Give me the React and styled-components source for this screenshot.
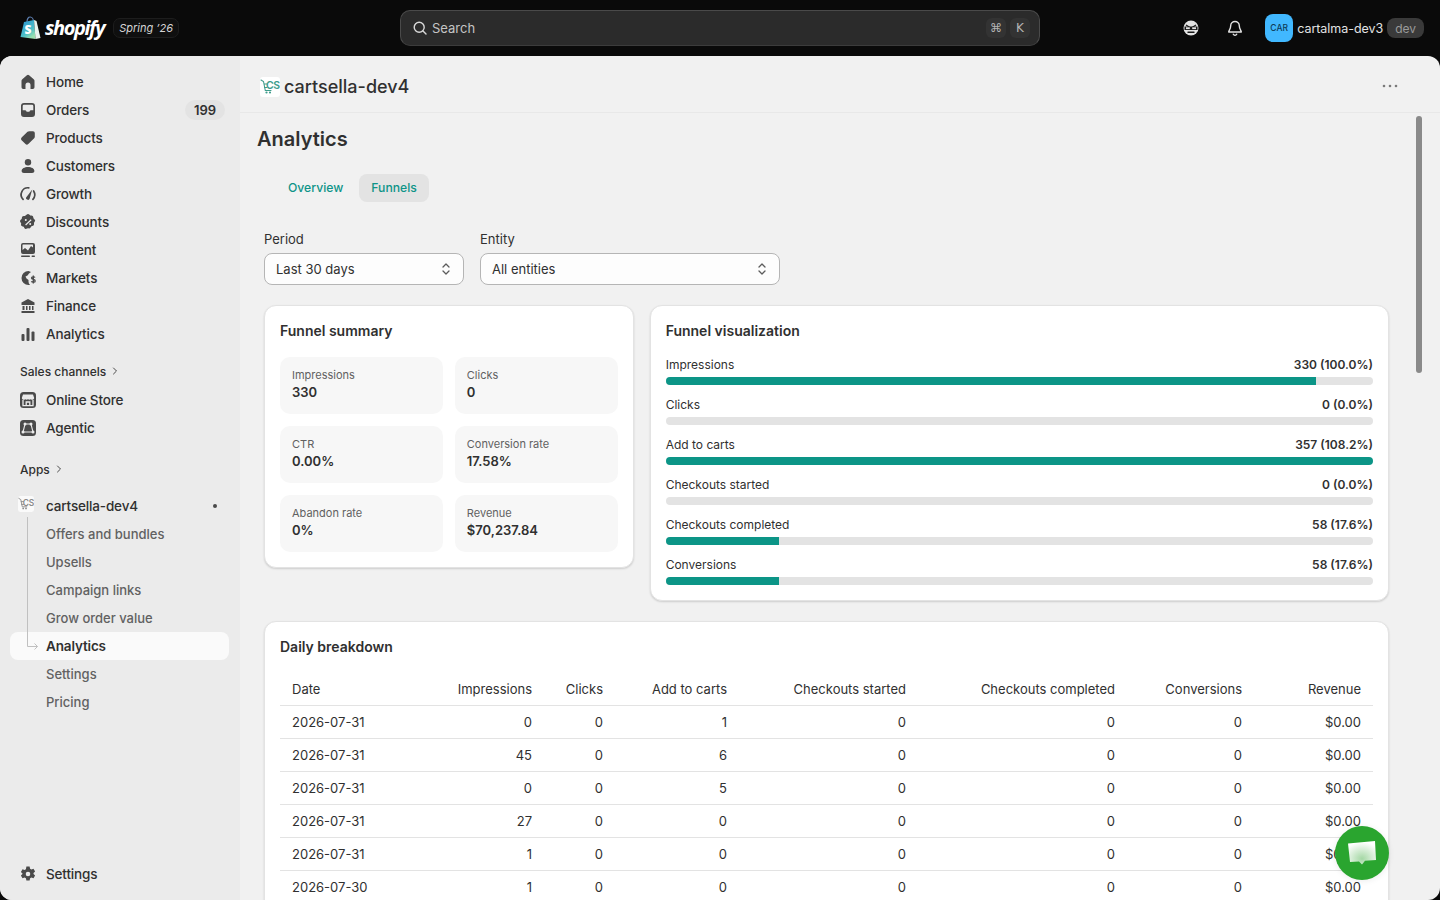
import React from "react";
import styled, { createGlobalStyle } from "styled-components";

const Global = createGlobalStyle`
  * { box-sizing: border-box; }
  html, body { margin: 0; height: 100%; overflow: hidden; background: #0a0a0a; }
  body { font-family: Inter, "Noto Sans", sans-serif; color: #303030; -webkit-font-smoothing: antialiased; }
`;

const Shell = styled.div`display: flex; flex-direction: column; height: 100vh;`;

const TopBar = styled.header`
  flex: 0 0 56px; display: grid; grid-template-columns: 1fr 640px 1fr; align-items: center;
  padding: 0 16px; background: #0a0a0a;
`;
const Brand = styled.div`display: flex; align-items: center; padding-left: 4px;`;
const Wordmark = styled.span`
  margin-left: 4px; color: #fff; font: italic 700 20px/24px "Open Sans", "Liberation Sans", sans-serif; letter-spacing: -1.4px;
`;
const Edition = styled.span`
  margin-left: 9px; height: 20px; padding: 0 5px; display: inline-flex; align-items: center; border: 1px solid #1d1d1d;
  border-radius: 7px; background: #0f0f0f; color: #d4d4d4; font-size: 11px; font-style: italic;
`;
const Search = styled.div`
  height: 36px; display: flex; align-items: center; gap: 4px; padding: 0 9px 0 11px; background: #2b2b2b;
  border: 1px solid #4a4a4a; border-bottom-color: #3c3c3c; border-radius: 10px; color: #c4c4c4; font-size: 13px;
`;
const SearchText = styled.span`flex: 1;`;
const KeyCap = styled.span`
  width: 20px; height: 20px; display: inline-flex; align-items: center; justify-content: center;
  background: #333; border-radius: 6px; color: #b5b5b5; font-size: 12px; font-family: "DejaVu Sans", Inter, sans-serif;
`;
const TopRight = styled.div`display: flex; align-items: center; justify-content: flex-end;`;
const TopIcon = styled.span`display: inline-flex; width: 20px; height: 20px; margin-right: 24px; &:nth-child(2){ margin-right: 20px; }`;
const Avatar = styled.span`
  width: 28px; height: 28px; display: inline-flex; align-items: center; justify-content: center; border-radius: 8px;
  background: #41b8ff; color: #0e3b57; font-size: 8.5px; font-weight: 500; letter-spacing: .2px;
`;
const StoreName = styled.span`margin-left: 4px; color: #e3e3e3; font-size: 12.5px; font-weight: 400; letter-spacing: -0.05px;`;
const DevPill = styled.span`
  margin-left: 4px; height: 20px; padding: 0 8px; display: inline-flex; align-items: center; border-radius: 8px;
  background: #3a3a3a; color: #9a9a9a; font-size: 12px;
`;

const Panel = styled.div`flex: 1; min-height: 0; display: flex; border-radius: 12px; overflow: hidden; background: #f1f1f1;`;
const Sidebar = styled.aside`
  flex: 0 0 240px; display: flex; flex-direction: column; padding: 12px 11px 12px 10px; background: #ebebeb;
`;
const NavRow = styled.div`
  position: relative; height: 28px; flex: none; display: flex; align-items: center; gap: 8px; padding: 0 4px 0 8px; border-radius: 8px;
  font-size: ${p => (p.$muted ? "13px" : "13.5px")}; letter-spacing: ${p => (p.$muted ? "0" : "-0.15px")};
  line-height: 20px; font-weight: ${p => (p.$strong ? 600 : 450)};
  color: ${p => (p.$muted ? "#616161" : "#303030")};
  background: ${p => (p.$active ? "#fafafa" : "transparent")};
  padding-left: ${p => (p.$sub ? 36 : 8)}px;
`;
const NavIcon = styled.span`width: 20px; height: 20px; flex: none; display: inline-flex;`;
const NavLabel = styled.span`flex: 1;`;
const Count = styled.span`
  height: 20px; width: 40px; display: inline-flex; align-items: center; justify-content: center; border-radius: 10px;
  background: #e3e3e3; font-size: 13px; font-weight: 600; letter-spacing: 0;
`;
const SectionTitle = styled.div`
  height: 28px; flex: none; display: flex; align-items: center; gap: 5px; padding-left: 10px; font-size: 12px; font-weight: 500;
  margin-top: ${p => p.$top}px; margin-bottom: ${p => p.$bottom}px;
`;
const AppDot = styled.span`width: 4px; height: 4px; margin-right: 8px; border-radius: 50%; background: #4a4a4a;`;
const Tree = styled.div`position: relative; display: flex; flex-direction: column;`;
const TreeLine = styled.svg`position: absolute; left: 14px; top: -4px; z-index: 1;`;
const Spacer = styled.div`flex: 1;`;

const Main = styled.main`position: relative; flex: 1; min-width: 0; display: flex; flex-direction: column;`;
const AppHeader = styled.div`
  flex: 0 0 57px; display: flex; align-items: center; justify-content: space-between; padding: 5px 42px 0 20px;
  border-bottom: 1px solid #e8e8e8;
`;
const AppTitle = styled.div`display: flex; align-items: center; gap: 4px; font-size: 18px; font-weight: 550;`;
const Dots = styled.svg`display: block; margin-top: -2px;`;
const Scroll = styled.div`flex: 1; min-height: 0; overflow: hidden; padding: 12px 51px 0 24px;`;
const Thumb = styled.div`
  position: absolute; right: 18px; top: 60px; width: 6px; height: 257px; border-radius: 3px; background: #8a8a8a;
`;
const PageTitle = styled.h1`margin: 0 0 0 -7px; font-size: 20px; line-height: 28px; font-weight: 600;`;
const Tabs = styled.div`display: flex; gap: 4px; margin: 21px 0 0 12px;`;
const Tab = styled.span`
  height: 28px; display: inline-flex; align-items: center; padding: 0 12px 2px; border-radius: 8px; color: #0d9488;
  font-size: 12.2px; font-weight: 550; background: ${p => (p.$active ? "#e3e3e3" : "transparent")};
`;
const Filters = styled.div`display: flex; gap: 16px; margin-top: 27px;`;
const Field = styled.div`width: ${p => p.$w}px;`;
const FieldLabel = styled.div`font-size: 13px; line-height: 20px; margin-bottom: 4px;`;
const Select = styled.div`
  height: 32px; display: flex; align-items: center; justify-content: space-between; padding: 0 9px 0 11px;
  background: #fdfdfd; border: 1px solid #b5b5b5; border-radius: 8px; font-size: 13px;
`;
const Grid = styled.div`display: grid; grid-template-columns: 1fr 2fr; gap: 16px; align-items: start; margin-top: 20px;`;
const Card = styled.section`
  background: #fff; border: 1px solid #e3e3e3; border-radius: 12px; padding: 15px;
  box-shadow: 0 1px 2px rgba(0,0,0,.15); margin-top: ${p => p.$top || 0}px;
`;
const CardTitle = styled.h2`margin: 0; font-size: 14px; line-height: 20px; font-weight: 600;`;
const Tiles = styled.div`display: grid; grid-template-columns: 1fr 1fr; gap: 12px; margin-top: 16px;`;
const Tile = styled.div`height: 57px; padding: 11px 12px; border-radius: 10px; background: #f7f7f7;`;
const TileLabel = styled.div`font-size: 11px; line-height: 14px; margin-bottom: 1px; color: #616161;`;
const TileValue = styled.div`font-size: 13px; line-height: 18px; font-weight: 600;`;
const Bars = styled.div`display: flex; flex-direction: column; gap: 10px; margin-top: 14px;`;
const BarHead = styled.div`display: flex; justify-content: space-between; font-size: 12px; line-height: 20px; height: 20px;`;
const BarValue = styled.span`font-weight: 600;`;
const Track = styled.div`height: 8px; margin-top: 2px; border-radius: 4px; background: #e3e3e3; overflow: hidden;`;
const Fill = styled.div`height: 100%; background: #0c9587;`;
const Table = styled.table`width: 100%; margin-top: 15px; border-collapse: collapse; table-layout: fixed; font-size: 13px;`;
const Th = styled.th`
  height: 33px; padding: 2px 12px 0; border-bottom: 1px solid #e3e3e3; font-weight: 400;
  text-align: ${p => (p.$left ? "left" : "right")};
`;
const Td = styled.td`
  height: 33px; padding: 0 12px; border-bottom: 1px solid #e3e3e3;
  text-align: ${p => (p.$left ? "left" : "right")};
`;
const ChatButton = styled.div`
  position: fixed; left: 1335px; top: 826px; width: 54px; height: 54px; display: flex; align-items: center; justify-content: center;
  border-radius: 50%; background: #2aa52f; box-shadow: 0 1px 6px rgba(0,0,0,.08);
`;

const I = ({ children }) => <svg width="20" height="20" viewBox="0 0 20 20" fill="#4a4a4a">{children}</svg>;
const icons = {
  home: <I><path d="M8.900 3.300a1.700 1.700 0 0 1 2.200 0l4.600 3.900c.5.4.8 1 .8 1.600v6.500a1.700 1.700 0 0 1-1.700 1.700h-2.300v-4a2.500 2.500 0 0 0-5 0v4H5.200a1.700 1.700 0 0 1-1.700-1.700V8.800c0-.6.3-1.200.8-1.600z" /></I>,
  orders: <I><path fillRule="evenodd" d="M6 3h8a3 3 0 0 1 3 3v8a3 3 0 0 1-3 3H6a3 3 0 0 1-3-3V6a3 3 0 0 1 3-3zm0 1.700A1.300 1.300 0 0 0 4.700 6v4.300h2.400c.6 0 1 .3 1.200.8l.3.600h2.800l.3-.6c.2-.5.700-.8 1.200-.8h2.400V6A1.300 1.300 0 0 0 14 4.700z" /></I>,
  products: <I><path d="M11.300 3.200H15a1.800 1.800 0 0 1 1.800 1.800v3.700c0 .6-.2 1.100-.6 1.500l-5.900 5.900a2 2 0 0 1-2.800 0l-3.900-3.900a2 2 0 0 1 0-2.800l5.900-5.700c.5-.3 1.100-.5 1.800-.5z" /></I>,
  customers: <I><circle cx="10" cy="6.200" r="3.200" /><path d="M3.600 15c0-2.400 2.800-4 6.400-4s6.400 1.600 6.400 4c0 1.300-1 2-2.300 2H5.900c-1.300 0-2.300-.7-2.300-2z" /></I>,
  growth: <I><path fill="none" stroke="#4a4a4a" strokeWidth="1.700" strokeLinecap="round" d="M5.100 15.300A6.800 6.800 0 0 1 10.800 3.800M15.600 7A6.800 6.800 0 0 1 14.900 15.300" /><path d="M14.200 5.400 8.700 12.800a1.800 1.800 0 1 0 3 1.800z" /></I>,
  discounts: <I><path fillRule="evenodd" d="M8.500 2.800a2 2 0 0 1 3 0l.7.7 1-.1a2 2 0 0 1 2.100 1.900l.1 1 .8.600a2 2 0 0 1 .3 3l-.6.8.2 1a2 2 0 0 1-1.700 2.300l-1 .2-.5.9a2 2 0 0 1-2.900.8L10 16l-.9.500a2 2 0 0 1-2.900-.8l-.5-.9-1-.2A2 2 0 0 1 3 12.300l.2-1-.6-.7a2 2 0 0 1 .3-3l.8-.7.100-1a2 2 0 0 1 2.100-1.900l1 .1zM7.800 7a1 1 0 1 0 0 2 1 1 0 0 0 0-2zm4.400 4a1 1 0 1 0 0 2 1 1 0 0 0 0-2zm.6-3.700-5.600 5.200.8.900 5.600-5.200z" /></I>,
  content: <I><path fillRule="evenodd" d="M5 3h10a2 2 0 0 1 2 2v7a2 2 0 0 1-2 2H5a2 2 0 0 1-2-2V5a2 2 0 0 1 2-2zm0 1.500a.5.5 0 0 0-.5.500v5l2.500-2 3 2.500 3-4.500 2 1.500V5a.5.5 0 0 0-.5-.5z" /><rect x="3" y="15.500" width="9" height="1.500" rx=".7" /><rect x="13.500" y="15.500" width="3.500" height="1.500" rx=".7" /></I>,
  markets: <I><path d="M10.500 3a7 7 0 1 0 0 14c.6 0 1-.1 1.500-.2a4 4 0 0 1-1.500-3V12l-2-1.500-1-2 2-1 1.500-2 2-1.500z" /><path fill="none" stroke="#4a4a4a" strokeWidth="1.300" d="M17 9.500c-.5-.8-3.500-1-3.500.6 0 1.800 3.700.9 3.700 2.800 0 1.700-3.200 1.500-3.900.5M15.300 7.500v8" /></I>,
  finance: <I><path d="M10 3 3.500 6.500V9h13V6.500z" /><path d="M4.500 10h2v4h-2zm3.500 0h1.500v4H8zm3 0h1.500v4H11zm3 0h1.500v4H14zM3.500 15h13v2h-13z" /></I>,
  analytics: <I><rect x="3.500" y="10" width="3" height="7" rx="1" /><rect x="8.500" y="4" width="3" height="13" rx="1" /><rect x="13.500" y="7.500" width="3" height="9.500" rx="1" /></I>,
  store: <I><rect x="2" y="2" width="16" height="16" rx="3.500" /><path fill="#ebebeb" d="M5 4.500h10l1.200 3.500a2 2 0 0 1-3.300 1.300 2.600 2.600 0 0 1-2.900 0 2.600 2.600 0 0 1-2.900 0A2 2 0 0 1 3.800 8z" /><path fill="none" stroke="#ebebeb" strokeWidth="1.300" d="M5 10v5.700h10V10M8.200 15.500v-3.500h3.600v3.500" /></I>,
  agentic: <I><rect x="2" y="2" width="16" height="16" rx="3.500" /><path fill="none" stroke="#ebebeb" strokeWidth="1.100" d="M7 6h6l2 8H5z" /><circle cx="7" cy="6" r="1.500" fill="#ebebeb" /><circle cx="13" cy="6" r="1.500" fill="#ebebeb" /><circle cx="5" cy="14" r="1.500" fill="#ebebeb" /><circle cx="15" cy="14" r="1.500" fill="#ebebeb" /></I>,
  settings: <I><path fillRule="evenodd" d="M8.400 2.500h3.200l.5 2.200 1.300.7 2.100-.7 1.600 2.700-1.600 1.500v1.200l1.600 1.500-1.600 2.700-2.100-.7-1.300.7-.5 2.200H8.400l-.5-2.200-1.300-.7-2.100.7-1.600-2.700 1.600-1.500V9.400L2.900 7.900l1.600-2.700 2.100.7 1.300-.7zM10 7.700a2.300 2.300 0 1 0 0 4.600 2.300 2.300 0 0 0 0-4.600z" /></I>,
};

const UpDown = () => (
  <svg width="16" height="16" viewBox="0 0 16 16" fill="none" stroke="#5c5c5c" strokeWidth="1.300" strokeLinecap="round" strokeLinejoin="round"><path d="M5 6 8 3l3 3M5 10l3 3 3-3" /></svg>
);
const SmallChevron = () => (
  <svg width="8" height="8" viewBox="0 0 8 8" fill="none" stroke="#4a4a4a" strokeWidth="1" strokeLinecap="round" strokeLinejoin="round"><path d="m2.500 1 3 3-3 3" /></svg>
);
const CsLogo = ({ size, color, tile }) => (
  <svg width={size} height={size} viewBox="0 0 20 20">
    <rect width="20" height="20" rx="3" fill={tile} />
    <path d="M1 3 3.500 4.500l1.800 9H11M4 7h3M4.500 10.500H7" fill="none" stroke={color} strokeWidth="1.100" strokeLinecap="round" />
    <circle cx="6.500" cy="15.500" r="1.100" fill={color} /><circle cx="10" cy="15.500" r="1.100" fill={color} />
    <text x="6" y="12" fontFamily="Inter, sans-serif" fontSize="10.500" fontWeight="600" letterSpacing="-.4" fill={color}>CS</text>
  </svg>
);

const items = [
  ["home", "Home"], ["orders", "Orders", "199"], ["products", "Products"], ["customers", "Customers"], ["growth", "Growth"],
  ["discounts", "Discounts"], ["content", "Content"], ["markets", "Markets"], ["finance", "Finance"], ["analytics", "Analytics"],
];
const tiles = [
  ["Impressions", "330"], ["Clicks", "0"], ["CTR", "0.00%"], ["Conversion rate", "17.58%"], ["Abandon rate", "0%"], ["Revenue", "$70,237.84"],
];
const bars = [
  ["Impressions", "330 (100.0%)", 91.9], ["Clicks", "0 (0.0%)", 0], ["Add to carts", "357 (108.2%)", 100],
  ["Checkouts started", "0 (0.0%)", 0], ["Checkouts completed", "58 (17.6%)", 16], ["Conversions", "58 (17.6%)", 16],
];
const widths = [164, 100, 71, 124, 179, 209, 127, 119];
const heads = ["Date", "Impressions", "Clicks", "Add to carts", "Checkouts started", "Checkouts completed", "Conversions", "Revenue"];
const rows = [
  ["2026-07-31", 0, 0, 1, 0, 0, 0, "$0.00"],
  ["2026-07-31", 45, 0, 6, 0, 0, 0, "$0.00"],
  ["2026-07-31", 0, 0, 5, 0, 0, 0, "$0.00"],
  ["2026-07-31", 27, 0, 0, 0, 0, 0, "$0.00"],
  ["2026-07-31", 1, 0, 0, 0, 0, 0, "$0.00"],
  ["2026-07-30", 1, 0, 0, 0, 0, 0, "$0.00"],
];

export default function App() {
  return (
    <Shell>
      <Global />
      <TopBar>
        <Brand>
          <svg width="21" height="24" viewBox="0 0 21 24">
            <defs>
              <linearGradient id="bag" x1="0" y1="0" x2="0.6" y2="1">
                <stop offset="0" stopColor="#2a8fd0" /><stop offset=".7" stopColor="#4cc0c8" /><stop offset="1" stopColor="#9be0b0" />
              </linearGradient>
            </defs>
            <path d="M7 6c0-3 1.500-5 3.200-5S13.500 3 13.500 6" fill="none" stroke="#5d7fb0" strokeWidth="1.200" />
            <path d="M4 6 14 4l1.500 19L0.500 21z" fill="url(#bag)" />
            <path d="M14 4l2.500 1 4 17-5 1z" fill="#e9f3ee" />
            <text x="4.500" y="18" fontFamily="'Open Sans', sans-serif" fontSize="12" fontWeight="800" fill="#fff">S</text>
          </svg>
          <Wordmark>shopify</Wordmark>
          <Edition>Spring ’26</Edition>
        </Brand>
        <Search>
          <svg width="16" height="16" viewBox="0 0 16 16" fill="none" stroke="#d8d8d8" strokeWidth="1.400" strokeLinecap="round"><circle cx="7.200" cy="7.200" r="5" /><path d="m11 11 3 3" /></svg>
          <SearchText>Search</SearchText>
          <KeyCap>⌘</KeyCap><KeyCap>K</KeyCap>
        </Search>
        <TopRight>
          <TopIcon>
            <svg width="20" height="20" viewBox="0 0 20 20"><circle cx="10" cy="10" r="7.500" fill="#e3e3e3" /><path d="M3.500 8.500h13v3.500h-13z" fill="#1a1a1a" /><path d="M5 7 9 9.500M15 7l-4 2.500" stroke="#1a1a1a" strokeWidth="1.200" /><rect x="5" y="9.300" width="3.800" height="1.800" fill="#e3e3e3" /><rect x="11.200" y="9.300" width="3.800" height="1.800" fill="#e3e3e3" /><path d="M7 14.200h6" stroke="#1a1a1a" strokeWidth="1.400" strokeLinecap="round" /></svg>
          </TopIcon>
          <TopIcon>
            <svg width="20" height="20" viewBox="0 0 20 20" fill="none" stroke="#e3e3e3" strokeWidth="1.400" strokeLinejoin="round" strokeLinecap="round"><path d="M10 3.500a4.300 4.300 0 0 0-4.300 4.300c0 3.400-2 4.700-2 6.200h12.600c0-1.500-2-2.800-2-6.200A4.300 4.300 0 0 0 10 3.500z" /><path d="M8.300 16.200a1.900 1.900 0 0 0 3.400 0" /></svg>
          </TopIcon>
          <Avatar>CAR</Avatar>
          <StoreName>cartalma-dev3</StoreName>
          <DevPill>dev</DevPill>
        </TopRight>
      </TopBar>
      <Panel>
        <Sidebar>
          {items.map(([icon, label, count]) => (
            <NavRow key={label}>
              <NavIcon>{icons[icon]}</NavIcon>
              <NavLabel>{label}</NavLabel>
              {count && <Count>{count}</Count>}
            </NavRow>
          ))}
          <SectionTitle $top={9} $bottom={1}>Sales channels <SmallChevron /></SectionTitle>
          <NavRow><NavIcon>{icons.store}</NavIcon><NavLabel>Online Store</NavLabel></NavRow>
          <NavRow><NavIcon>{icons.agentic}</NavIcon><NavLabel>Agentic</NavLabel></NavRow>
          <SectionTitle $top={13} $bottom={9}>Apps <SmallChevron /></SectionTitle>
          <NavRow>
            <NavIcon><CsLogo size={16} color="#8a8a8a" tile="#fafafa" /></NavIcon>
            <NavLabel>cartsella-dev4</NavLabel>
            <AppDot />
          </NavRow>
          <Tree>
            <TreeLine width="16" height="136" viewBox="0 0 16 136" fill="none" stroke="#c0c0c0" strokeWidth="1">
              <path d="M3.500 1v129.500h10M10.500 127.500l3 3-3 3" />
            </TreeLine>
            <NavRow $sub $muted>Offers and bundles</NavRow>
            <NavRow $sub $muted>Upsells</NavRow>
            <NavRow $sub $muted>Campaign links</NavRow>
            <NavRow $sub $muted>Grow order value</NavRow>
            <NavRow $sub $active $strong>Analytics</NavRow>
            <NavRow $sub $muted>Settings</NavRow>
            <NavRow $sub $muted>Pricing</NavRow>
          </Tree>
          <Spacer />
          <NavRow><NavIcon>{icons.settings}</NavIcon><NavLabel>Settings</NavLabel></NavRow>
        </Sidebar>
        <Main>
          <AppHeader>
            <AppTitle><CsLogo size={20} color="#3f9d8c" tile="#ffffff" />cartsella-dev4</AppTitle>
            <Dots width="16" height="4" viewBox="0 0 16 4" fill="#7a7a7a"><circle cx="2" cy="2" r="1.300" /><circle cx="8" cy="2" r="1.300" /><circle cx="14" cy="2" r="1.300" /></Dots>
          </AppHeader>
          <Thumb />
          <Scroll>
            <PageTitle>Analytics</PageTitle>
            <Tabs><Tab>Overview</Tab><Tab $active>Funnels</Tab></Tabs>
            <Filters>
              <Field $w={200}><FieldLabel>Period</FieldLabel><Select>Last 30 days<UpDown /></Select></Field>
              <Field $w={300}><FieldLabel>Entity</FieldLabel><Select>All entities<UpDown /></Select></Field>
            </Filters>
            <Grid>
              <Card>
                <CardTitle>Funnel summary</CardTitle>
                <Tiles>
                  {tiles.map(([label, value]) => (
                    <Tile key={label}><TileLabel>{label}</TileLabel><TileValue>{value}</TileValue></Tile>
                  ))}
                </Tiles>
              </Card>
              <Card>
                <CardTitle>Funnel visualization</CardTitle>
                <Bars>
                  {bars.map(([label, value, pct]) => (
                    <div key={label}>
                      <BarHead><span>{label}</span><BarValue>{value}</BarValue></BarHead>
                      <Track><Fill style={{ width: `${pct}%` }} /></Track>
                    </div>
                  ))}
                </Bars>
              </Card>
            </Grid>
            <Card $top={20}>
              <CardTitle>Daily breakdown</CardTitle>
              <Table>
                <colgroup>{widths.map((w, i) => <col key={i} width={w} />)}</colgroup>
                <thead><tr>{heads.map((h, i) => <Th key={h} $left={i === 0}>{h}</Th>)}</tr></thead>
                <tbody>
                  {rows.map((r, n) => (
                    <tr key={n}>{r.map((c, i) => <Td key={i} $left={i === 0}>{c}</Td>)}</tr>
                  ))}
                </tbody>
              </Table>
            </Card>
          </Scroll>
        </Main>
      </Panel>
      <ChatButton>
        <svg width="32" height="30" viewBox="0 0 32 30">
          <defs>
            <radialGradient id="bubble" cx=".5" cy=".75" r=".7">
              <stop offset="0" stopColor="#a5d8a5" /><stop offset="1" stopColor="#fff" />
            </radialGradient>
          </defs>
          <path d="M2 5.500 29 3l1 19-11 .8-3 3.700-3-3-9 .5z" fill="url(#bubble)" />
        </svg>
      </ChatButton>
    </Shell>
  );
}
